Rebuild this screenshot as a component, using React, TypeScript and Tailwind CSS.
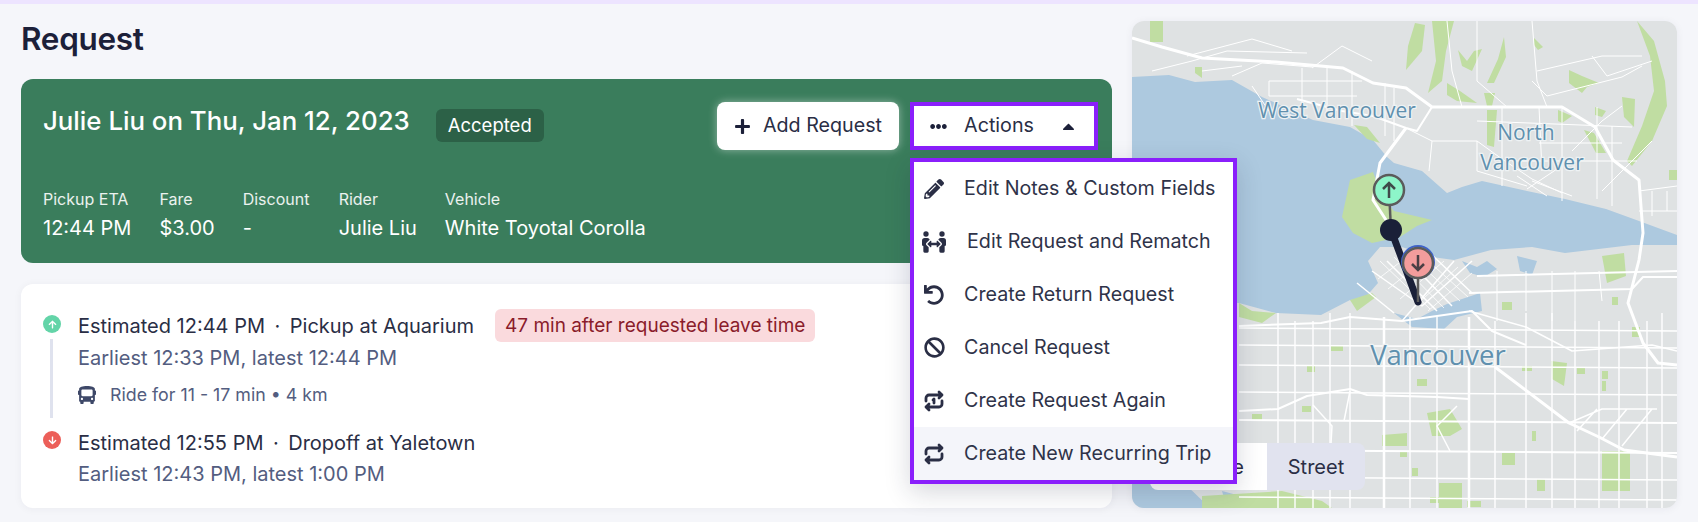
import React from "react";
import { FaArrowDown, FaArrowUp, FaBan, FaBus, FaCaretUp, FaEllipsisH, FaPencilAlt, FaPeopleArrows, FaPlus, FaUndo } from "react-icons/fa";
import { TbRepeat, TbRepeatOnce } from "react-icons/tb";

const stats = [
  { label: "Pickup ETA", value: "12:44 PM" },
  { label: "Fare", value: "$3.00" },
  { label: "Discount", value: "-", width: "w-[68px]" },
  { label: "Rider", value: "Julie Liu" },
  { label: "Vehicle", value: "White Toyotal Corolla" },
];

const actions = [
  { icon: <FaPencilAlt size={20} />, label: "Edit Notes & Custom Fields" },
  { icon: <FaPeopleArrows size={24} />, label: "Edit Request and Rematch", shift: true },
  { icon: <FaUndo size={20} />, label: "Create Return Request" },
  { icon: <FaBan size={21} />, label: "Cancel Request" },
  { icon: <TbRepeatOnce size={24} strokeWidth={2.8} />, label: "Create Request Again" },
  { icon: <TbRepeat size={24} strokeWidth={2.8} />, label: "Create New Recurring Trip", active: true },
];

const water = [
  "M0 56 L37 54 L63 61 L100 59 L130 76 L181 99 L218 106 L241 119 L255 136 L262 142 L290 150 L315 172 L330 166 L350 160 L395 170 L433 178 L474 188 L507 200 L545 214 L545 224 L500 224 L433 232 L400 226 L359 229 L322 239 L300 236 L270 226 L248 226 L236 240 L246 262 L232 278 L218 279 L189 294 L144 292 L107 282 L0 282 Z",
  "M0 460 L50 460 L78 487 L0 487 Z",
  "M90 470 L135 482 L150 487 L95 487 Z",
  "M262 292 L285 298 L300 290 L315 283 L330 278 L348 272 L350 290 L325 296 L312 308 L280 306 Z",
  "M330 240 L345 246 L355 240 L365 248 L352 256 L338 252 Z",
  "M385 235 L405 240 L400 254 L388 250 Z",
];

const parks = [
  "M218 159 L241 151 L250 175 L262 190 L300 199 L285 205 L268 216 L240 222 L221 212 L210 196 Z",
  "M18 0 L31 0 L31 21 L18 21 Z",
  "M63 46 L70 46 L70 57 L63 52 Z",
  "M283 2 L293 4 L290 30 L274 49 L276 25 Z",
  "M300 0 L322 0 L314 30 L310 60 L296 72 L304 40 Z",
  "M326 29 L335 40 L342 30 L350 28 L340 50 L330 45 Z",
  "M372 16 L374 36 L362 62 L355 62 L366 38 Z",
  "M402 17 L411 26 L406 29 L402 24 Z",
  "M437 49 L450 55 L467 62 L455 66 L450 72 L437 62 Z",
  "M505 0 L522 20 L533 60 L535 85 L520 120 L500 145 L495 140 L510 105 L522 70 L518 35 Z",
  "M315 62 L328 70 L345 82 L325 80 L315 74 Z",
  "M352 72 L363 72 L360 85 L355 85 Z",
  "M355 89 L365 89 L362 126 L355 124 Z",
  "M426 89 L440 95 L430 102 L426 100 Z",
  "M463 86 L474 90 L470 96 L463 94 Z",
  "M490 76 L503 78 L502 106 L492 96 Z",
  "M452 109 L462 112 L474 132 L464 132 Z",
  "M222 104 L235 106 L248 122 L235 118 Z",
  "M537 149 L545 149 L545 159 L537 159 Z",
  "M107 282 L120 290 L144 292 L130 302 L107 296 Z",
  "M218 279 L240 272 L244 276 L225 290 Z",
  "M470 235 L492 232 L494 255 L475 262 Z",
  "M470 430 L498 430 L498 470 L470 470 Z",
  "M295 392 L318 388 L330 408 L318 415 L300 415 Z",
  "M307 462 L330 462 L330 487 L307 487 Z",
  "M70 487 L200 487 L190 480 L150 470 L70 475 Z",
  "M419 340 L435 342 L432 365 L420 358 Z",
  "M250 414 L275 412 L275 425 L250 425 Z",
];

const parkRects = [
  [199, 325, 12, 5], [175, 345, 8, 6], [285, 358, 10, 7], [370, 281, 10, 8], [390, 345, 10, 5], [445, 347, 8, 6], [470, 350, 6, 8], [470, 360, 4, 10],
  [170, 385, 9, 6], [120, 393, 10, 7], [400, 410, 4, 10], [268, 430, 7, 6], [370, 432, 13, 12], [335, 480, 14, 6], [405, 458, 8, 12], [298, 476, 14, 6], [280, 447, 6, 8], [500, 306, 8, 10], [480, 276, 6, 8],
];

const vertical = [146, 163, 181, 198, 218, 252, 278, 305, 337, 363, 394, 420, 443, 467, 487, 515, 530];
const horizontal = [307, 324, 344, 371, 399, 429, 456, 476];

const roads: [string, number][] = [
  ["M0 17 L30 26 L70 37 L144 41 L211 47 L241 62 L274 67 L300 86 L430 86 L463 106 L481 139 L507 159 L511 212 L507 239 L496 282 L511 322 L526 342 L545 344", 3],
  ["M274 107 L248 142 L241 179 L256 202 L262 208", 3],
  ["M300 86 L285 110 L274 107 L241 95 L210 90 L165 78", 2],
  ["M363 346 L437 402 L467 416 L492 429 L545 436", 3],
  ["M240 250 L290 285 L340 240 M255 240 L305 290 M270 233 L320 285 M225 262 L262 292 M300 234 L340 272 M322 240 L270 300", 1.5],
  ["M248 240 L298 288 M262 236 L312 287 M278 234 L328 280 M292 236 L336 276 M246 258 L280 232 M256 268 L296 236 M268 278 L312 240 M282 286 L326 246 M296 290 L340 252", 0.8],
  ["M107 305 L189 302 L218 296 L270 300 L340 290 L360 310 L394 324", 2],
  ["M345 255 L545 250 M337 272 L500 268 L511 256 L545 256", 2],
  ["M337 290 L394 306 L440 330 L520 324 L545 330", 1.5],
  ["M107 390 L146 388 L175 375 L218 368 L235 374 L305 376 L337 378", 2],
  ["M181 384 L200 405 L198 440 M325 385 L305 405 L318 430 M218 370 L212 400", 1.5],
  ["M437 402 L470 388 L525 388 M470 418 L495 388 M490 425 L520 388 M445 410 L465 388", 1.5],
  ["M20 50 L60 40 L95 30 L175 32 M55 35 L120 18 L160 30 M180 47 L210 25 L240 40 M100 55 L130 42 L180 46 M70 50 L110 45", 1],
  ["M137 60 L230 60 M137 75 L225 75 M137 90 L120 65 M170 47 L170 90 M195 47 L195 90 M220 50 L220 105 M137 60 L137 75", 1],
  ["M253 62 L253 115 M262 67 L262 120 M274 107 L300 120 L345 120 L370 138 L400 158 L430 172 M300 120 L297 150 M345 120 L345 150 L395 165", 1],
  ["M330 86 L320 50 L315 0 M400 0 L405 60 L415 86 M345 0 L345 60 L375 86 M460 35 L475 55 L520 40 M400 60 L415 75 L490 56 L510 45 M405 50 L470 35 L510 35", 1],
  ["M370 86 L370 165 M407 86 L410 150 M430 86 L430 180 M465 86 L465 178 M480 105 L480 185 M407 122 L490 122 M345 100 L500 106 M380 140 L505 140 M470 170 L520 120 M440 130 L470 100 L490 85", 1],
  ["M507 170 L545 165 M507 190 L545 190 M520 170 L520 195 M535 170 L535 190", 1],
  ["M400 160 L440 175 M395 168 L425 148 M385 155 L415 175", 1],
  ["M470 280 L467 250 M420 250 L420 300 M443 250 L443 300 M365 250 L365 300 M394 250 L394 290", 1],
];

const CityMap: React.FC = () => (
  <svg viewBox="0 0 545 487" className="h-full w-full">
    <rect width="545" height="487" fill="#dfe2e3" />
    {water.map((d) => (
      <path key={d} d={d} fill="#adc9df" />
    ))}
    {parks.map((d) => (
      <path key={d} d={d} fill="#c0dda2" />
    ))}
    {parkRects.map(([x, y, w, h]) => (
      <rect key={`${x}-${y}`} x={x} y={y} width={w} height={h} fill="#c0dda2" />
    ))}
    {vertical.map((x) => (
      <line key={x} x1={x} y1={x > 240 && x < 360 ? 296 : x % 2 ? 300 : 292} x2={x} y2="487" stroke="#ffffff" strokeWidth={x === 252 || x === 337 ? 2.5 : 1.4} />
    ))}
    {horizontal.map((y) => (
      <line key={y} x1="107" y1={y} x2="545" y2={y + 3} stroke="#ffffff" strokeWidth={y === 429 || y === 399 ? 2 : 1.4} />
    ))}
    {roads.map(([d, w]) => (
      <path key={d} d={d} fill="none" stroke="#ffffff" strokeWidth={w} strokeLinejoin="round" />
    ))}
    <g fontFamily="'Open Sans', sans-serif" fill="#6090ae" stroke="#eef2f4" strokeWidth="2.5" style={{ paintOrder: "stroke" }} textAnchor="middle">
      <text x="205" y="97" fontSize="21">West Vancouver</text>
      <text x="394" y="119" fontSize="21">North</text>
      <text x="400" y="149" fontSize="21">Vancouver</text>
      <text x="306" y="344" fontSize="27.5">Vancouver</text>
    </g>
    <line x1="259" y1="209" x2="286" y2="281" stroke="#1a2038" strokeWidth="7" strokeLinecap="round" />
    <line x1="257" y1="169" x2="259" y2="209" stroke="#5b5b5b" strokeWidth="2.5" />
    <circle cx="259" cy="209" r="11" fill="#1a2038" />
    <line x1="286" y1="242" x2="286" y2="281" stroke="#5b5b5b" strokeWidth="2.5" />
    <circle cx="257" cy="169" r="15" fill="#8df5c9" stroke="#5b5b5b" strokeWidth="2.5" />
    <circle cx="286" cy="241" r="16" fill="none" stroke="#3f63c8" strokeWidth="2" />
    <circle cx="286" cy="242" r="15" fill="#f39c9c" stroke="#5b5b5b" strokeWidth="2.5" />
    <path d="M257 177 V162 M251 168 L257 162 L263 168" fill="none" stroke="#3f4a4a" strokeWidth="2.5" />
    <path d="M286 234 V249 M280 243 L286 249 L292 243" fill="none" stroke="#4a3f45" strokeWidth="2.5" />
  </svg>
);

export default function App() {
  return (
    <div className="h-[532px] w-[1698px] overflow-hidden bg-white font-['Inter',sans-serif]">
      <div className="flex h-[522px] gap-5 border-t-4 border-[#ede4ff] bg-[#f5f6fa] pl-[21px] pr-[21px] pt-[17px]">
        <div className="flex w-[1091px] flex-col">
          <h1 className="h-[58px] text-[31.5px] font-semibold leading-[36px] tracking-[-0.01em] text-[#1c2039]">Request</h1>

          <div className="relative h-[184px] rounded-xl bg-[#3a7d5c] px-[22px] pt-[23px] text-white">
            <div className="flex items-start">
              <div className="text-[25.8px] font-medium leading-[38px]">Julie Liu on Thu, Jan 12, 2023</div>
              <span className="ml-[26px] mt-[7px] flex h-[33px] items-center rounded-md bg-[#2c6147] px-3 text-[18.5px]">Accepted</span>
              <div className="-mr-2 ml-auto flex gap-[11px]">
                <button className="flex h-[48px] w-[182px] items-center justify-center gap-3 rounded-lg bg-white text-[19.7px] text-[#2a2e45] shadow-[0_0_8px_rgba(255,255,255,0.45)]">
                  <FaPlus size={17} className="text-[#1c2039]" />
                  Add Request
                </button>
                <div className="relative">
                  <button className="flex h-[48px] w-[188px] items-center justify-center gap-[17px] border-[4px] border-[#8a1ffb] bg-white text-[19.7px] text-[#2a2e45]">
                    <FaEllipsisH size={17} className="text-[#1c2039]" />
                    Actions
                    <FaCaretUp size={19} className="ml-2 text-[#1c2039]" />
                  </button>
                  <div className="absolute left-0 top-[56px] z-10 w-[327px] border-[4px] border-[#8a1ffb] bg-white text-[#2f3349] shadow-[0_8px_24px_rgba(30,35,60,0.18)]">
                    {actions.map((a) => (
                      <div key={a.label} className={`flex h-[53px] items-center text-[19.7px] ${a.active ? "bg-[#f4f5fa]" : ""}`}>
                        <span className="flex w-[50px] justify-center pr-[10px] text-[#2a2e45]">{a.icon}</span>
                        <span className={a.shift ? "ml-[3px]" : ""}>{a.label}</span>
                      </div>
                    ))}
                  </div>
                </div>
              </div>
            </div>
            <div className="mt-[37px] flex gap-7">
              {stats.map((s) => (
                <div key={s.label} className={s.width}>
                  <div className="text-[16px] leading-[24px] text-white/90">{s.label}</div>
                  <div className="mt-[3px] text-[20px] leading-[28px]">{s.value}</div>
                </div>
              ))}
            </div>
          </div>

          <div className="mt-[21px] h-[224px] rounded-xl bg-white pl-[22px] pr-4 pt-[25px] shadow-[0_1px_8px_rgba(30,35,60,0.05)]">
            <div className="flex">
              <div className="flex w-[35px] flex-col items-start">
                <span className="mt-[6px] flex h-[18px] w-[18px] items-center justify-center rounded-full bg-[#63d4a8] text-white">
                  <FaArrowUp size={9} />
                </span>
                <span className="ml-[7px] mt-[6px] h-[79px] w-[3px] bg-[#dfe2ee]" />
              </div>
              <div>
                <div className="flex items-center text-[20px] leading-[30px] text-[#2a2e45]">
                  Estimated 12:44 PM<span className="mx-[9.5px]">·</span>Pickup at Aquarium
                  <span className="ml-[21px] flex h-[33px] items-center rounded-md bg-[#fadadd] px-[10px] text-[19px] text-[#8a1c2b]">47 min after requested leave time</span>
                </div>
                <div className="mt-[1px] text-[20px] leading-[30px] text-[#535d80]">Earliest 12:33 PM, latest 12:44 PM</div>
                <div className="mt-[9px] flex items-center gap-[14px] text-[17.8px] leading-[26px] text-[#535d80]">
                  <FaBus size={18} className="text-[#3e4868]" />
                  Ride for 11 - 17 min • 4 km
                </div>
              </div>
            </div>
            <div className="mt-[10px] flex">
              <div className="w-[35px]">
                <span className="mt-[3px] flex h-[18px] w-[18px] items-center justify-center rounded-full bg-[#ec5f59] text-white">
                  <FaArrowDown size={9} />
                </span>
              </div>
              <div>
                <div className="text-[20px] leading-[30px] text-[#2a2e45]">
                  Estimated 12:55 PM<span className="mx-[9.5px]">·</span>Dropoff at Yaletown
                </div>
                <div className="mt-[1px] text-[20px] leading-[30px] text-[#535d80]">Earliest 12:43 PM, latest 1:00 PM</div>
              </div>
            </div>
          </div>
        </div>

        <div className="relative h-[487px] w-[545px] overflow-hidden rounded-xl shadow-[0_1px_8px_rgba(30,35,60,0.06)]">
          <CityMap />
          <div className="absolute bottom-[18px] left-[18px] flex h-[47px] overflow-hidden rounded-lg text-[20px] text-[#2a2e45]">
            <span className="flex w-[117px] items-center justify-end bg-white pr-[23px]">Satellite</span>
            <span className="flex w-[98px] items-center justify-center bg-[#e1e3ef]">Street</span>
          </div>
        </div>
      </div>
    </div>
  );
}
